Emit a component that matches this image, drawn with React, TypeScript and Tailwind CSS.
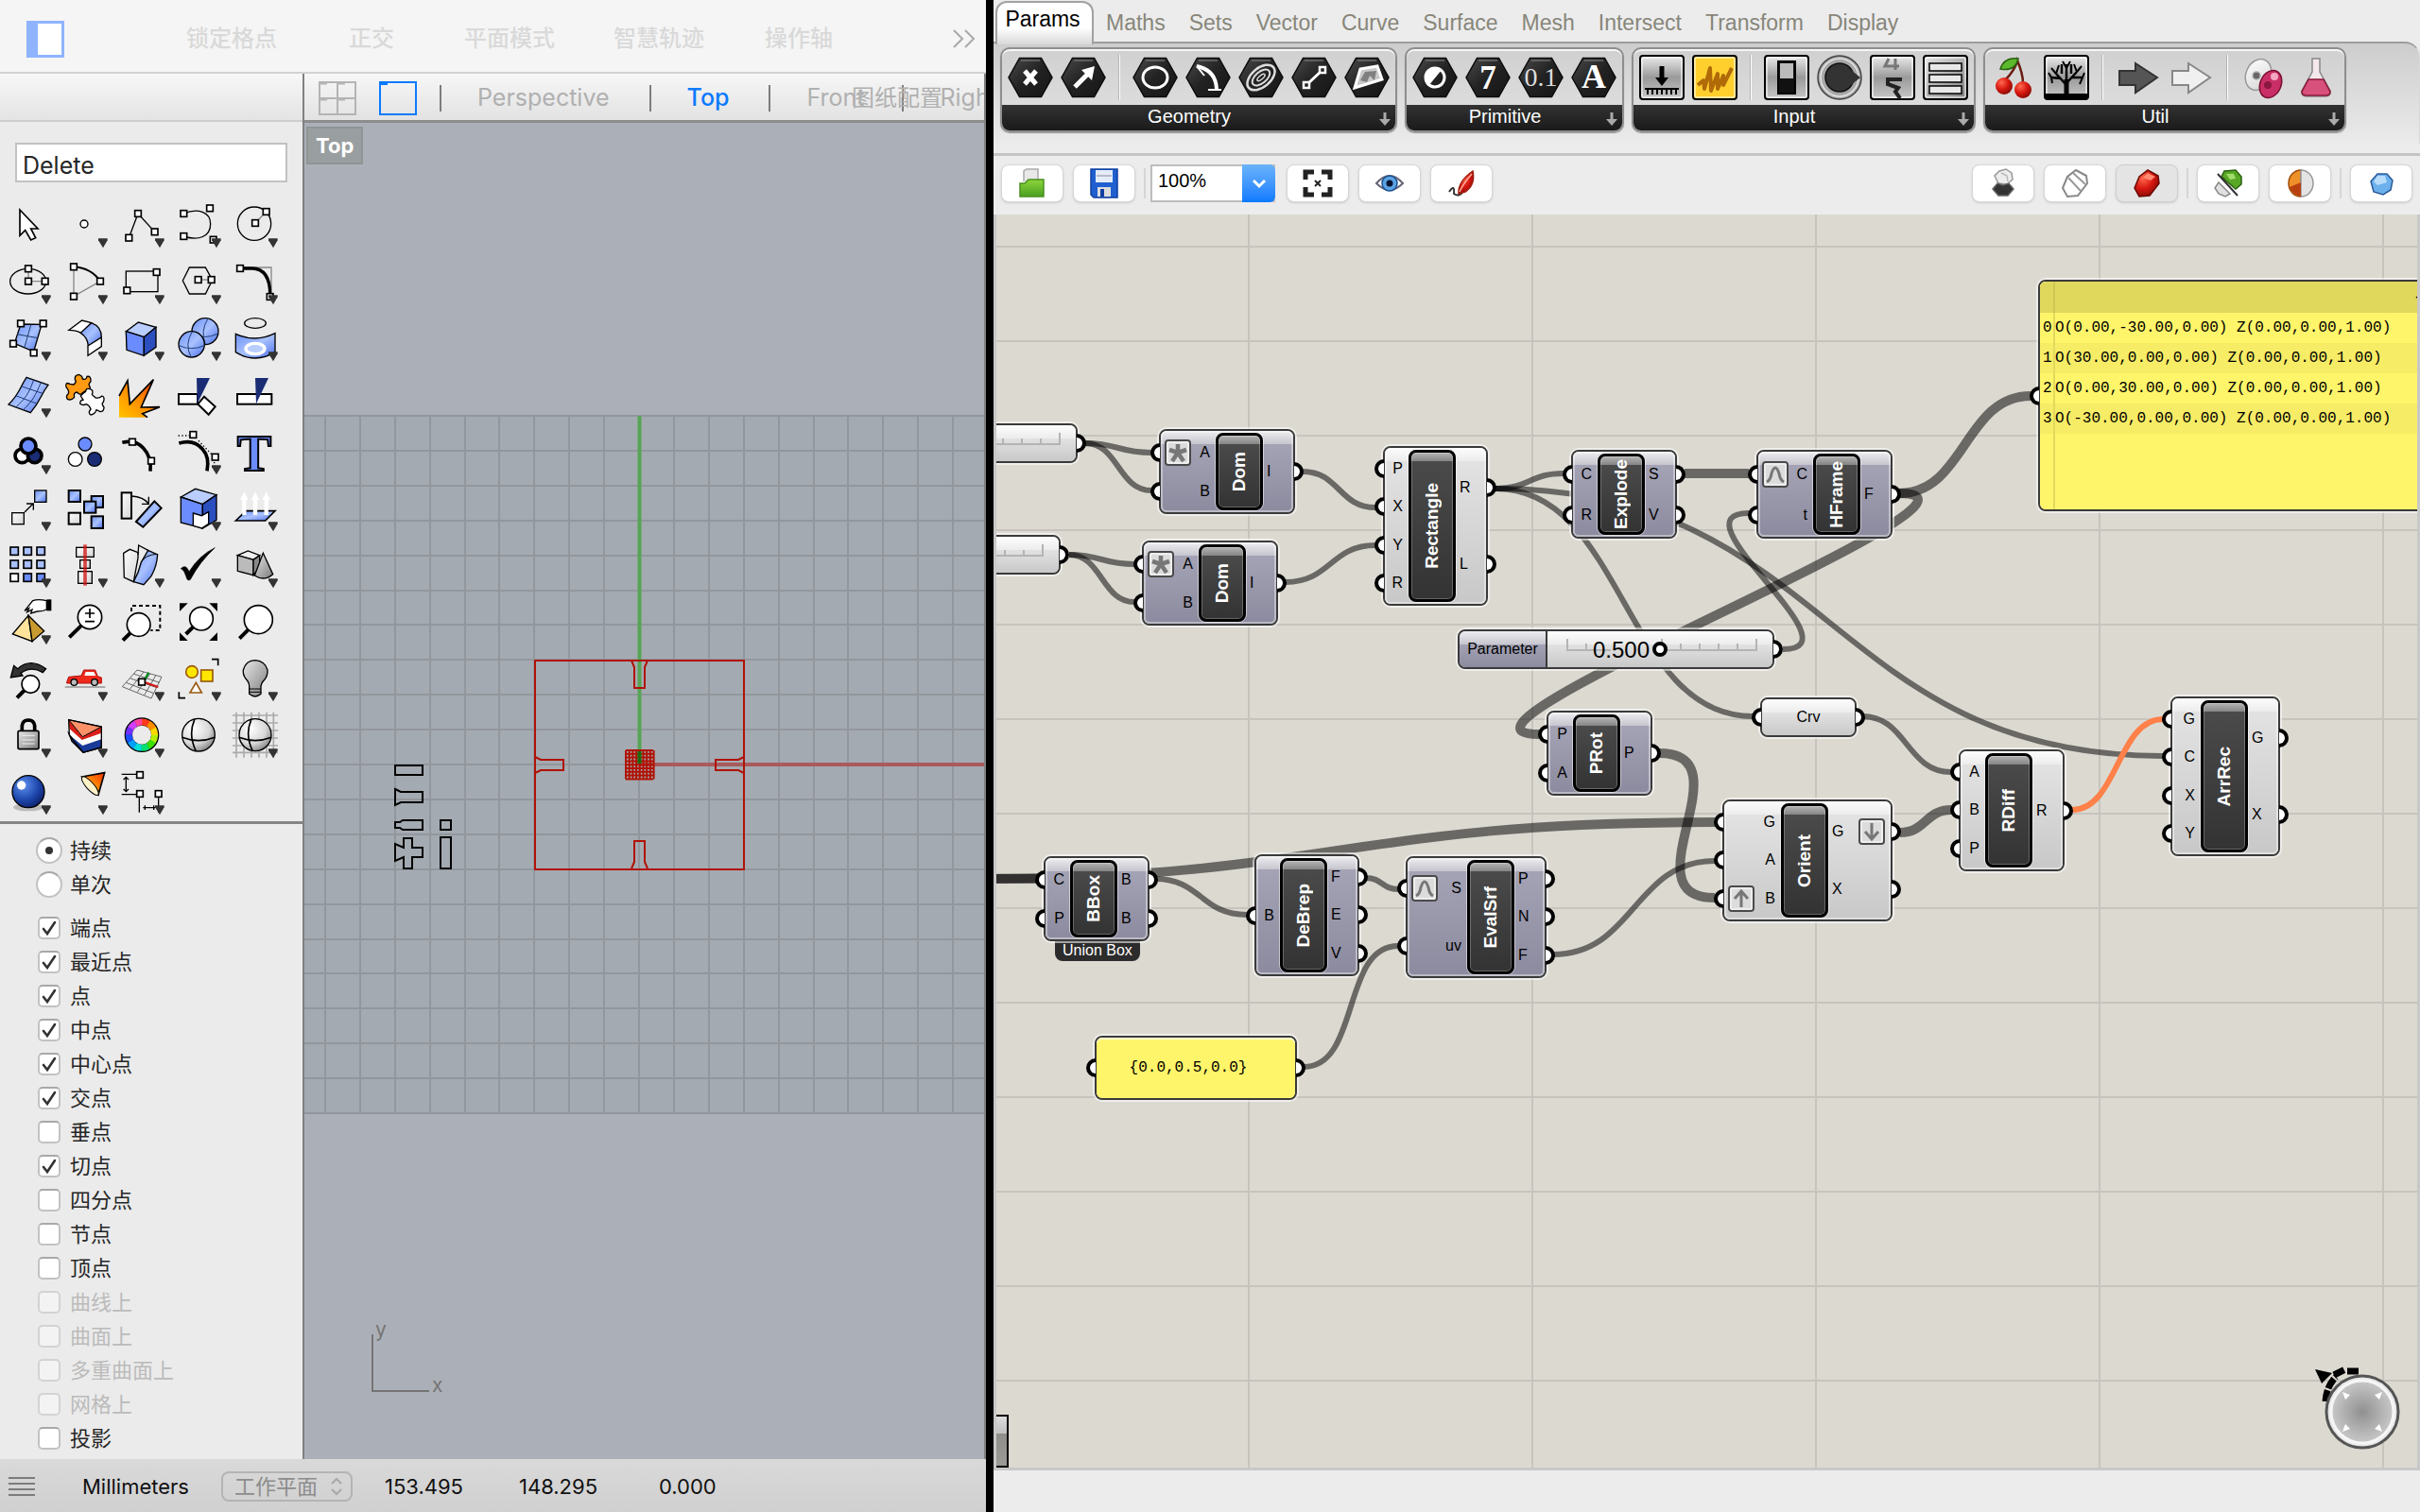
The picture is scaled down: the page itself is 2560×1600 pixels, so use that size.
import React from "react";

type Kids = { children?: React.ReactNode };

/* ---------- left tool palette icons (drawn on a 180 unit square) ---------- */

function Sq({ x, y }: { x: number; y: number }) {
  return <rect x={x - 10} y={y - 10} width="20" height="20" fill="#fff" stroke="#000" strokeWidth="5" />;
}

function Glass({ x, y, r, hx, hy }: { x: number; y: number; r: number; hx: number; hy: number }) {
  return (
    <>
      <path d={`M${x - r * 0.7} ${y + r * 0.7}L${hx} ${hy}`} stroke="#000" strokeWidth="12" />
      <circle cx={x} cy={y} r={r} fill="#fff" stroke="#000" strokeWidth="5" />
    </>
  );
}

const WHEEL = ["#ff3a1a", "#ff8c00", "#ffd800", "#b4f000", "#3ce000", "#00e070", "#00e0d8", "#00a0ff", "#1a50ff", "#7030ff", "#d040ff", "#ff40a0"];

const TOOLS: { name: string; more: boolean; art: React.ReactNode }[] = [
  { name: "Select", more: false, art: <path d="M63 45V127L80 110L98 141L113 134L98 105H120Z" fill="#fff" strokeWidth="5" /> },
  { name: "Point", more: true, art: <circle cx="87" cy="90" r="12" fill="#fff" /> },
  { name: "Polyline", more: true, art: <><path d="M49 134L78 57L131 115" /><Sq x={49} y={134} /><Sq x={78} y={57} /><Sq x={131} y={115} /></> },
  { name: "Curve", more: true, art: <><path d="M43 57C88 38 128 52 128 90C128 130 90 145 43 129" /><Sq x={43} y={57} /><Sq x={126} y={40} /><Sq x={43} y={129} /><Sq x={137} y={140} /></> },
  { name: "Circle", more: true, art: <><circle cx="87" cy="89" r="53" /><path d="M90 87L125 51" stroke="#888" /><Sq x={90} y={87} /><Sq x={125} y={51} /></> },
  { name: "Ellipse", more: true, art: <><ellipse cx="89" cy="92" rx="57" ry="40" /><path d="M90 52V92H143" stroke="#888" /><Sq x={90} y={52} /><Sq x={90} y={92} /><Sq x={143} y={92} /></> },
  { name: "Arc", more: true, art: <><path d="M54 46V140L138 92" stroke="#888" /><path d="M54 46Q110 50 138 92" strokeWidth="6" /><Sq x={54} y={46} /><Sq x={54} y={140} /><Sq x={138} y={92} /></> },
  { name: "Rectangle", more: true, art: <><rect x="40" y="60" width="101" height="65" /><Sq x={137} y={63} /><Sq x={43} y={121} /></> },
  { name: "Polygon", more: true, art: <><path d="M40 90L61 48H112L134 88L112 132H61Z" /><path d="M89 87H131" stroke="#888" /><Sq x={89} y={87} /><Sq x={131} y={87} /></> },
  { name: "Fillet", more: true, art: <><path d="M42 48H141V130" stroke="#888" /><path d="M42 51H80C120 52 137 80 137 134" strokeWidth="10" /><Sq x={42} y={51} /><Sq x={137} y={141} /></> },
  { name: "Surface", more: true, art: <><path d="M66 48L132 49L107 135L46 109Z" fill="url(#sky)" /><path d="M98 50L78 121M54 80L120 92" stroke="#1a3a6a" strokeWidth="3" /><Sq x={66} y={46} /><Sq x={137} y={46} /><Sq x={42} y={110} /><Sq x={107} y={139} /></> },
  { name: "Surface blend", more: true, art: <><path d="M39 67L80 36L110 44L78 76Q62 67 39 67Z" fill="#fff" /><path d="M110 44Q142 56 142 90L100 117Q98 90 76 76Z" fill="url(#sky)" /><path d="M142 90V119L99 148V117Z" fill="#fff" /></> },
  { name: "Box", more: true, art: <><path d="M40 71L79 42L135 58L97 89Z" fill="#b9cdff" /><path d="M40 71L97 89V148L42 130Z" fill="#6b8cff" /><path d="M97 89L135 58V121L97 148Z" fill="#2c4fc0" /></> },
  { name: "Sphere", more: true, art: <><circle cx="111" cy="71" r="42" fill="url(#sky)" /><path d="M70 80Q110 98 152 78M120 30Q95 70 112 112" strokeWidth="3" stroke="#23407a" /><circle cx="68" cy="112" r="41" fill="url(#sky)" /><path d="M28 116Q68 134 108 116M70 72Q45 112 66 152" strokeWidth="3" stroke="#23407a" /></> },
  { name: "Project", more: true, art: <><ellipse cx="90" cy="45" rx="34" ry="16" /><path d="M28 79Q90 108 153 77V137Q90 175 28 137Z" fill="url(#sky)" /><ellipse cx="90" cy="126" rx="30" ry="17" fill="#b9cdff" stroke="#fff" strokeWidth="10" /></> },
  { name: "Mesh surface", more: true, art: <><path d="M84 37L153 61C130 90 130 110 97 149L27 123C62 90 62 70 84 37Z" fill="url(#sky)" /><path d="M107 45C90 90 84 100 50 132M130 53C112 95 105 110 74 140M70 66L135 88M50 95L116 120" strokeWidth="3" stroke="#1d3a78" /></> },
  { name: "Join", more: false, art: <><path d="M30 68Q26 50 42 58L54 60Q64 52 58 44Q56 30 70 28Q82 32 82 42Q94 46 96 34Q110 32 108 50Q98 58 106 68L104 80Q92 76 82 86Q76 96 64 84Q52 86 56 100Q46 112 34 106Q28 96 36 90Q42 82 30 68Z" fill="#ff9a12" /><path d="M76 96Q84 86 92 82Q92 70 106 74Q118 78 112 92L124 102Q136 104 144 96Q154 100 148 116Q140 120 150 132Q150 146 138 146L126 140Q122 154 108 156Q98 150 108 138Q104 126 94 122Q82 128 74 120Q74 110 84 108Z" fill="#fff" /></> },
  { name: "Explode", more: false, art: <><path d="M18 164V96L45 47L52 122L127 44L88 132L147 131L92 152L108 164Z" fill="url(#fire)" stroke="none" /><path d="M18 96L45 47L52 122L127 44L88 132L147 131L92 152L108 164" strokeWidth="5" /></> },
  { name: "Trim", more: false, art: <><rect x="27" y="90" width="60" height="32" fill="#fff" strokeWidth="6" /><path d="M108 98L143 130L122 155L88 122Z" fill="#fff" strokeWidth="6" /><path d="M84 39H126L86 121Z" fill="#1a2c74" stroke="none" /></> },
  { name: "Split", more: false, art: <><rect x="33" y="90" width="109" height="32" fill="#fff" strokeWidth="6" /><path d="M90 39H132L93 121Z" fill="#1a2c74" stroke="none" /></> },
  { name: "Group", more: true, art: <g strokeWidth="11"><circle cx="70" cy="106" r="22" fill="#fff" /><circle cx="110" cy="106" r="22" fill="#1a2c74" /><circle cx="90" cy="75" r="24" fill="#6b8cff" /></g> },
  { name: "Ungroup", more: false, art: <><circle cx="90" cy="69" r="21" fill="#6b8cff" /><circle cx="59" cy="117" r="22" fill="#fff" /><circle cx="120" cy="117" r="22" fill="#1a2c74" /></> },
  { name: "Edit points", more: false, art: <><path d="M28 64Q70 54 95 82Q122 110 117 155" strokeWidth="11" /><Sq x={60} y={62} /><Sq x={120} y={122} /></> },
  { name: "Control points", more: true, art: <><path d="M28 66Q75 52 102 84Q126 110 117 154" strokeWidth="11" /><path d="M26 42H62M90 58L140 110V158" strokeDasharray="4 7" /><Sq x={73} y={39} /><Sq x={143} y={110} /></> },
  { name: "Text", more: false, art: <text x="87" y="152" textAnchor="middle" fontFamily="Liberation Serif, serif" fontWeight="700" fontSize="164" fill="#6b8cff" strokeWidth="6">T</text> },
  { name: "Move", more: true, art: <><rect x="110" y="36" width="37" height="37" fill="url(#sky)" /><rect x="38" y="107" width="38" height="36" fill="url(#pale)" /><path d="M78 105L105 78M84 78H106V98" /></> },
  { name: "Copy", more: false, art: <><rect x="38" y="36" width="37" height="36" fill="url(#sky)" strokeWidth="6" /><rect x="110" y="54" width="37" height="36" fill="url(#sky)" strokeWidth="6" /><rect x="87" y="71" width="37" height="36" fill="url(#sky)" strokeWidth="6" /><rect x="38" y="107" width="37" height="36" fill="url(#pale)" strokeWidth="6" /><rect x="110" y="118" width="37" height="38" fill="url(#sky)" strokeWidth="6" /></> },
  { name: "Rotate", more: false, art: <><rect x="26" y="43" width="31" height="82" fill="url(#pale)" strokeWidth="6" /><path d="M58 54Q95 56 112 78M112 56V79H90" /><path d="M72 135L130 70L152 92L94 152Z" fill="url(#sky)" strokeWidth="6" /></> },
  { name: "Boolean", more: true, art: <><path d="M34 57L80 31L147 50L103 80Z" fill="#b9cdff" /><path d="M34 57L103 80V156L34 138Z" fill="#6b8cff" /><path d="M103 80L147 50V130L103 156Z" fill="#2c4fc0" /><path d="M73 108L100 116L122 104V142L100 156L73 148Z" fill="#fff" /></> },
  { name: "Extrude", more: true, art: <><path d="M28 132L60 101H153L122 132Z" fill="url(#sky)" strokeWidth="5" /><path d="M55 114V58M90 114V58M125 114V58" stroke="#fff" strokeWidth="13" /><path d="M42 66L55 40L68 66ZM77 66L90 40L103 66ZM112 66L125 40L138 66Z" fill="#fff" stroke="none" /></> },
  { name: "Array", more: true, art: <>{[0, 1, 2].map((r) => [0, 1, 2].map((c) => <rect key={`${r}${c}`} x={33 + c * 42} y={36 + r * 42} width="25" height="25" strokeWidth="5" fill={r === 2 ? (c === 0 ? "#fff" : "#6b8cff") : "#a9c0ff"} />))}</> },
  { name: "Align", more: true, art: <><rect x="62" y="37" width="56" height="30" fill="url(#pale)" /><rect x="74" y="77" width="32" height="26" fill="url(#pale)" /><rect x="68" y="113" width="44" height="38" fill="url(#pale)" /><path d="M90 28V158" stroke="#d01010" strokeOpacity=".75" strokeWidth="11" /></> },
  { name: "Twist", more: true, art: <><path d="M32 55L52 43L78 53V70L64 146L34 132Z" fill="url(#pale)" /><path d="M78 60L80 30L110 46" /><path d="M64 146Q80 118 88 84L110 46L140 60Q138 96 120 128L96 155Z" fill="url(#sky)" /><path d="M88 84Q100 60 140 58" strokeWidth="3" /></> },
  { name: "Check", more: true, art: <path d="M34 104Q50 88 60 114Q92 62 142 38Q94 82 64 139Q54 145 51 130Q45 108 34 104Z" fill="#000" strokeWidth="2" /> },
  { name: "Solids", more: true, art: <><path d="M34 62L67 48L104 62L84 76Z" fill="#eee" /><path d="M34 62L84 76V125L34 112Z" fill="#bbb" /><path d="M84 76L104 62V100L84 125Z" fill="#888" /><path d="M115 55L146 122Q118 146 88 126Z" fill="url(#steel)" /></> },
  { name: "Pyramid", more: true, art: <><path d="M40 132L90 73L102 155Z" fill="#ffe39a" /><path d="M90 73L140 122L102 155Z" fill="#c99a30" /><path d="M148 26Q120 20 104 26L78 58L92 50L86 62L102 54L98 66L118 60Q136 60 148 54Z" fill="#fff" /><rect x="150" y="24" width="11" height="32" fill="#000" /></> },
  { name: "Zoom in or out", more: false, art: <><Glass x={105} y={78} r={38} hx={40} hy={142} /><path d="M90 66H120M105 51V81M90 92H120" strokeWidth="5" /></> },
  { name: "Zoom window", more: false, art: <><path d="M57 60V42H148V120H118" strokeDasharray="12 9" strokeWidth="6" /><Glass x={80} y={102} r={37} hx={30} hy={152} /></> },
  { name: "Zoom extents", more: false, art: <><path d="M30 34H56L30 60ZM150 34H124L150 60ZM30 153H56L30 127ZM150 153H124L150 127Z" fill="#000" stroke="none" /><Glass x={99} y={83} r={37} hx={50} hy={132} /></> },
  { name: "Zoom", more: false, art: <Glass x={100} y={86} r={45} hx={40} hy={146} /> },
  { name: "Undo view", more: true, art: <><path d="M34 90L44 52L56 62Q96 26 146 62L136 74Q100 52 66 76L72 84Z" fill="#333" /><Glass x={97} y={111} r={28} hx={54} hy={154} /></> },
  { name: "Car", more: true, art: <><path d="M26 120H154" stroke="#aaa" strokeWidth="6" /><path d="M32 104L38 88L78 84L86 66H122L130 86L142 90V108H32Z" fill="#ee2a1c" stroke="#b01010" strokeWidth="3" /><path d="M92 72H118L124 84H88Z" fill="#fff" stroke="none" /><circle cx="55" cy="105" r="10" fill="#bbb" /><circle cx="120" cy="105" r="10" fill="#bbb" /></> },
  { name: "Construction plane", more: true, art: <><path d="M28 119L75 66L153 88L120 156ZM52 127L96 72M76 136L116 78M98 146L134 84M40 106L128 140M52 92L138 122M64 78L146 106" stroke="#666" strokeWidth="3" /><path d="M95 104L112 74" stroke="#0a8a20" strokeWidth="7" /><path d="M95 104L142 120" stroke="#d01818" strokeWidth="7" /><Sq x={90} y={104} /></> },
  { name: "Filter", more: true, art: <><g stroke="#9a5a10" strokeWidth="5"><circle cx="69" cy="72" r="19" fill="#ffe600" /><rect x="98" y="66" width="37" height="36" fill="#ffe600" /><path d="M82 106L100 138H63Z" fill="#fff" /></g><path d="M132 32H152V52M28 136V155H48" strokeWidth="5" /></> },
  { name: "Lamp", more: true, art: <><path d="M71 120Q72 106 60 94Q50 80 52 66Q60 36 90 35Q122 38 129 66Q130 84 120 96Q108 108 108 120V142Q90 158 71 142Z" fill="url(#steel)" /><path d="M72 126H108M72 136H108" strokeWidth="3" /></> },
  { name: "Lock", more: true, art: <><path d="M70 80V62Q72 46 90 45Q108 46 110 62V80" strokeWidth="11" /><rect x="57" y="79" width="66" height="58" rx="5" fill="url(#steel)" strokeWidth="5" /><path d="M70 94H110M70 108H110M70 120H110" stroke="#eee" strokeWidth="3" /></> },
  { name: "Layers", more: true, art: <><path d="M38 86L82 122L142 104V132L84 148L48 112Z" fill="#1a3a9a" /><path d="M40 70L82 104L142 84V106L82 126L40 92Z" fill="#fff" stroke="none" /><path d="M38 44L82 98L142 66V86L80 108L40 72Z" fill="#d82018" stroke="none" /><path d="M38 44L142 66L82 98Z" fill="#ff9068" strokeWidth="3" /><path d="M38 44L142 66V132L84 148L40 92Z" /></> },
  { name: "Colours", more: true, art: <><circle cx="90" cy="92" r="41" strokeWidth="28" stroke="#000" />{WHEEL.map((c, i) => <circle key={c} cx="90" cy="92" r="41" stroke={c} strokeWidth="21" pathLength="12" strokeDasharray="1.03 10.97" strokeDashoffset={-i} transform="rotate(-90 90 92)" />)}<circle cx="90" cy="92" r="30" fill="#ebebeb" stroke="none" /></> },
  { name: "Shaded", more: false, art: <><circle cx="90" cy="92" r="52" fill="url(#ball)" /><path d="M38 100Q90 120 142 100M78 42Q56 90 82 144" strokeWidth="5" /></> },
  { name: "Shaded grid", more: true, art: <><path d="M18 30H162M18 54H162M18 78H162M18 102H162M18 126H162M18 148H162M30 20V164M54 20V164M78 20V164M102 20V164M126 20V164M148 20V164" stroke="#aaa" strokeWidth="5" /><circle cx="90" cy="92" r="51" fill="url(#ball)" /><path d="M39 100Q90 120 141 100M78 42Q56 90 82 144" strokeWidth="5" /></> },
  { name: "Render", more: true, art: <><ellipse cx="90" cy="142" rx="48" ry="12" fill="#bbb" stroke="none" /><circle cx="90" cy="92" r="51" fill="url(#deep)" /><circle cx="68" cy="72" r="14" fill="#fff" stroke="none" /></> },
  { name: "Spot light", more: true, art: <><path d="M80 45L152 32L132 102Z" fill="url(#fire)" strokeWidth="5" /><ellipse cx="106" cy="74" rx="12" ry="38" transform="rotate(-42 106 74)" fill="#fff3c8" strokeWidth="3" /></> },
  { name: "Dimension", more: true, art: <><path d="M26 37H76M26 101H76M82 106V158M143 106V158M40 48V90M32 54L40 46L48 54M32 84L40 92L48 84M94 143H132M100 136V150M128 136V150" /><Sq x={84} y={39} /><Sq x={84} y={99} /><Sq x={143} y={99} /></> },
];

function Defs() {
  return (
    <svg className="absolute size-0" aria-hidden="true">
      <defs>
        <linearGradient id="sky" x1="0" y1="0" x2="1" y2="1"><stop offset="0" stopColor="#6b90f4" /><stop offset=".5" stopColor="#a9c2ff" /><stop offset="1" stopColor="#4a6ee8" /></linearGradient>
        <linearGradient id="pale" x1="0" y1="0" x2="1" y2="1"><stop offset="0" stopColor="#fff" /><stop offset="1" stopColor="#d4d4d4" /></linearGradient>
        <linearGradient id="fire" x1="0" y1="1" x2="1" y2="0"><stop offset="0" stopColor="#ffc400" /><stop offset=".5" stopColor="#ff8a00" /><stop offset="1" stopColor="#f03000" /></linearGradient>
        <linearGradient id="steel" x1="0" y1="0" x2="1" y2="1"><stop offset="0" stopColor="#e8e8e8" /><stop offset="1" stopColor="#7c7c7c" /></linearGradient>
        <radialGradient id="ball" cx=".35" cy=".3" r=".8"><stop offset="0" stopColor="#fff" /><stop offset=".6" stopColor="#d8d8d8" /><stop offset="1" stopColor="#777" /></radialGradient>
        <radialGradient id="deep" cx=".35" cy=".3" r=".8"><stop offset="0" stopColor="#5c90f0" /><stop offset=".6" stopColor="#1c44a8" /><stop offset="1" stopColor="#0a1c60" /></radialGradient>
        <linearGradient id="hex" x1="0" y1="0" x2="1" y2="1"><stop offset="0" stopColor="#4a4a4a" /><stop offset=".5" stopColor="#222" /><stop offset="1" stopColor="#161616" /></linearGradient>
        <linearGradient id="metal" x1="0" y1="0" x2="0" y2="1"><stop offset="0" stopColor="#ececec" /><stop offset=".5" stopColor="#9a9a9a" /><stop offset="1" stopColor="#c8c8c8" /></linearGradient>
        <linearGradient id="folder" x1="0" y1="0" x2="0" y2="1"><stop offset="0" stopColor="#8ed63c" /><stop offset="1" stopColor="#4aa020" /></linearGradient>
        <radialGradient id="red" cx=".35" cy=".3" r=".8"><stop offset="0" stopColor="#ff6a50" /><stop offset=".5" stopColor="#d81810" /><stop offset="1" stopColor="#7a0804" /></radialGradient>
        <radialGradient id="dial" cx=".5" cy=".5" r=".5"><stop offset="0" stopColor="#909090" /><stop offset="1" stopColor="#c8c8c8" /></radialGradient>
      </defs>
    </svg>
  );
}

const SNAPS: [string, boolean, boolean][] = [
  ["端点", true, false], ["最近点", true, false], ["点", true, false], ["中点", true, false], ["中心点", true, false],
  ["交点", true, false], ["垂点", false, false], ["切点", true, false], ["四分点", false, false], ["节点", false, false],
  ["顶点", false, false], ["曲线上", false, true], ["曲面上", false, true], ["多重曲面上", false, true], ["网格上", false, true], ["投影", false, false],
];

function Sidebar() {
  return (
    <aside className="flex w-[320px] shrink-0 flex-col bg-[#ebebeb]">
      <div className="h-[51px] shrink-0 border-b-2 border-[#cdcdcd] bg-linear-to-b from-[#f7f7f7] to-[#e4e4e4]" />
      <div className="px-4 pt-[22px]">
        <input aria-label="Command" defaultValue="Delete" className="h-[42px] w-[288px] border-2 border-[#c2c2c2] bg-white px-1.5 pt-1.5 text-[25px] text-[#262626] outline-none" />
      </div>
      <div className="mt-3.5 grid w-[300px] grid-cols-5">
        {TOOLS.map((t) => (
          <button key={t.name} aria-label={t.name} className="size-[60px]">
            <svg viewBox="0 0 180 180" className="size-[60px] overflow-visible" fill="none" stroke="#000" strokeWidth="4">
              {t.art}
              {t.more && <path d="M132 136H161V142L147 166L132 142Z" fill="#333" stroke="none" />}
            </svg>
          </button>
        ))}
      </div>
      <div className="mt-0.5 border-t-[3px] border-[#858585]" />
      <fieldset className="pt-2.5 pl-[38px] text-[22px] text-[#262626]">
        {["持续", "单次"].map((t, i) => (
          <label key={t} className="flex h-9 items-center gap-2">
            <input type="radio" name="mode" defaultChecked={i === 0} className="grid size-7 appearance-none place-items-center rounded-full border-2 border-[#c2c2c2] border-t-[#a8a8a8] bg-white before:size-2 before:rounded-full checked:before:bg-[#333]" />
            {t}
          </label>
        ))}
      </fieldset>
      <div className="mt-2.5 pl-10 text-[22px] text-[#262626]">
        {SNAPS.map(([t, on, off]) => (
          <label key={t} className={off ? "flex h-9 items-center gap-2.5 text-[#bbb]" : "flex h-9 items-center gap-2.5"}>
            <span className="grid size-6">
              <input type="checkbox" defaultChecked={on} disabled={off} className="peer col-start-1 row-start-1 size-6 appearance-none rounded-[5px] border-2 border-[#c2c2c2] border-t-[#a8a8a8] bg-white disabled:border-[#d3d3d3] disabled:bg-[#f3f3f3]" />
              <svg viewBox="0 0 24 24" className="invisible col-start-1 row-start-1 size-6 peer-checked:visible" fill="none" stroke="#333" strokeWidth="2.6">
                <path d="M6 13L10 18L18 6" strokeLinecap="round" />
              </svg>
            </span>
            {t}
          </label>
        ))}
      </div>
    </aside>
  );
}

function Bar() {
  return <span className="h-7 w-0.5 shrink-0 bg-[#7d7d7d]" />;
}

const CELL = 36.9;

function Viewport() {
  const n = Array.from({ length: 21 }, (_, i) => i - 10);
  return (
    <div className="relative flex-1 overflow-hidden bg-[#abb0b8]">
      <svg className="absolute top-0 left-0" width="724" height="1416" viewBox="322 130 724 1416" fill="none">
        <rect x="300" y="440" width="760" height="738" fill="#a4aab1" />
        <path stroke="#92979d" strokeWidth="2" d={n.map((i) => `M300 ${Math.round(809 + i * CELL)}H1060M${Math.round(676 + i * CELL)} 440V1178`).join("")} />
        <path d="M676.5 440V809" stroke="#56a556" strokeWidth="4" />
        <path d="M676.5 809H1060" stroke="#a95a5c" strokeWidth="4" />
        <g stroke="#b01205" strokeWidth="2">
          <rect x="566" y="699" width="221" height="221" />
          <path d="M668 699L671 706V728H682V706L685 699M668 919L671 912V890H682V912L685 919M566 801L572 804H596V815H572L566 818M787 801L781 804H757V815H781L787 818" />
          <path d={Array.from({ length: 9 }, (_, i) => `M662 ${794 + i * 3.8}H691M${662 + i * 3.7} 794V824.500`).join("")} />
        </g>
        <path d="M676.5 795V808" stroke="#1c6a10" strokeWidth="4" />
        <g stroke="#000" strokeWidth="2">
          <rect x="418" y="810" width="29" height="10" />
          <path d="M418 835L424 838H447V849H424L418 852Z" />
          <path d="M418 870H423L426 868H447V878H426L423 876H418Z" />
          <rect x="466" y="868" width="11" height="10" />
          <rect x="466" y="886" width="11" height="33" />
          <path d="M427 887H436V897H447V907H436V919H427V907L418 911V893L427 897Z" />
        </g>
        <path d="M394 1412V1472H454" stroke="#757575" strokeWidth="2" />
        <g fill="#757575" fontFamily="Inter, sans-serif" fontSize="21">
          <text x="397" y="1414">y</text>
          <text x="457" y="1473">x</text>
        </g>
      </svg>
      <span className="absolute top-1 left-0.5 border-2 border-[#8f9494] bg-[#999ea0] px-2 text-[22px] leading-9 font-bold text-white">Top</span>
    </div>
  );
}

function Modeler() {
  return (
    <section className="flex min-w-0 flex-col overflow-hidden bg-[#ebebeb]">
      <header className="flex h-[78px] shrink-0 items-center border-b-2 border-[#d2d2d2] bg-[#f5f5f5] pt-1.5 text-[24px] font-medium text-[#d9d9d9]">
        <button aria-label="Sidebar" className="ml-7 h-[39px] w-10 border-[3px] border-l-[12px] border-[#8fb3ff] bg-white" />
        <nav className="ml-[103px] flex">
          <button className="w-[148px]">锁定格点</button>
          <button className="w-[148px]">正交</button>
          <button className="w-[144px]">平面模式</button>
          <button className="w-[172px]">智慧轨迹</button>
          <button className="w-[124px]">操作轴</button>
        </nav>
        <button aria-label="More" className="mr-2.5 ml-auto">
          <svg width="26" height="20" fill="none" stroke="#a9a9a9" strokeWidth="2"><path d="M2 1L11 10L2 19M14 1L23 10L14 19" /></svg>
        </button>
      </header>
      <div className="flex min-h-0 flex-1">
        <Sidebar />
        <div className="flex min-w-0 flex-1 flex-col border-x-2 border-[#7f8080]">
          <nav className="relative flex h-[52px] shrink-0 items-center overflow-hidden border-b-[3px] border-[#8b8d8d] bg-linear-to-b from-[#f7f7f7] to-[#e2e2e2] pt-0.5 pl-[15px] text-[25px] text-[#b0b0b0]">
            <button aria-label="Four views" className="shrink-0">
              <svg width="40" height="36" fill="none" stroke="#b4b4b4" strokeWidth="2"><path d="M1 1H39V35H1ZM20 1V35M1 18H39" /><path d="M1 2H9M20 2H28M1 19H9M20 19H28" strokeWidth="3" /></svg>
            </button>
            <button aria-label="Single view" className="mx-6 shrink-0">
              <svg width="40" height="36" fill="none" stroke="#0a7aff" strokeWidth="2"><path d="M1 1H39V35H1Z" /><path d="M1 2H9" strokeWidth="4" /></svg>
            </button>
            <Bar />
            <button className="mr-[42px] ml-[38px]">Perspective</button>
            <Bar />
            <button className="mr-[42px] ml-[38px] font-medium text-[#0a7aff]">Top</button>
            <Bar />
            <button className="mr-10 ml-[38px]">Front</button>
            <Bar />
            <button className="ml-[38px] shrink-0">Right</button>
            <button className="absolute left-[579px] text-[24px]">图纸配置</button>
          </nav>
          <Viewport />
        </div>
      </div>
      <footer className="flex h-14 shrink-0 items-center bg-linear-to-b from-[#d9d9d9] to-[#d0d0d0] pt-0.5 pl-[9px] text-[22px] text-[#111]">
        <svg width="28" height="22" stroke="#7c7c7c" strokeWidth="2"><path d="M0 2H28M0 8H28M0 14H28M0 20H28" /></svg>
        <span className="w-[197px] pl-[50px]">Millimeters</span>
        <span className="relative">
          <select aria-label="Plane" className="h-8 w-[139px] appearance-none rounded-lg border-2 border-[#b4b4b4] bg-transparent pl-3 text-[22px] leading-7 text-[#8c8c8c]">
            <option>工作平面</option>
          </select>
          <svg className="absolute top-1.5 right-2.5" width="14" height="20" fill="none" stroke="#a8a8a8" strokeWidth="2"><path d="M2 7L7 2L12 7M2 13L7 18L12 13" /></svg>
        </span>
        <span className="w-[142px] pl-[34px]">153.495</span>
        <span className="w-[150px] pl-[34px]">148.295</span>
        <span className="pl-8">0.000</span>
      </footer>
    </section>
  );
}

/* ---------- node editor ribbon ---------- */

function Hex({ children }: Kids) {
  return (
    <svg viewBox="0 0 48 48" className="size-12" fill="none" stroke="#fff" strokeWidth="3">
      <path d="M12.500 3.500H35.500L47 24L35.500 44.500H12.500L1 24Z" fill="url(#hex)" stroke="#0c0c0c" strokeWidth="1.500" />
      <path d="M14 6H34" stroke="#888" strokeWidth="1" />
      {children}
    </svg>
  );
}

function Plate({ fill, children }: Kids & { fill: string }) {
  return (
    <svg viewBox="0 0 48 48" className="size-12" fill="none" stroke="#000" strokeWidth="2">
      <rect x="1" y="1" width="46" height="46" rx="3" fill={fill} />
      <rect x="3" y="3" width="42" height="42" rx="2" stroke="#fff" strokeOpacity=".7" strokeWidth="1.500" />
      {children}
    </svg>
  );
}

function Free({ children }: Kids) {
  return <svg viewBox="0 0 48 48" className="size-12" fill="none" stroke="#333" strokeWidth="1.500">{children}</svg>;
}

const hexText = { stroke: "none", textAnchor: "middle" as const, fontFamily: "Liberation Serif, serif" };

const GROUPS: { name: string; icons: (React.ReactNode | null)[] }[] = [
  {
    name: "Geometry",
    icons: [
      <Hex><path d="M18 17L30 31M30 17L18 31" strokeWidth="5" /></Hex>,
      <Hex><path d="M15 34L29 20" strokeWidth="5" /><path d="M22 16L36 12L33 27Z" fill="#fff" stroke="none" /></Hex>,
      null,
      <Hex><ellipse cx="24" cy="24" rx="13" ry="11" /></Hex>,
      <Hex><path d="M12 12Q32 16 33 36" strokeWidth="4" /><path d="M12 12L20 22M24 37H38" strokeWidth="2" /></Hex>,
      <Hex><ellipse cx="24" cy="24" rx="17" ry="10" transform="rotate(-40 24 24)" strokeWidth="2.500" stroke="#ddd" /><ellipse cx="24" cy="24" rx="11" ry="6" transform="rotate(-40 24 24)" strokeWidth="2" stroke="#ddd" /><ellipse cx="24" cy="24" rx="5" ry="2" transform="rotate(-40 24 24)" strokeWidth="1.500" stroke="#ddd" /></Hex>,
      <Hex><path d="M17 31L32 17" /><rect x="13" y="29" width="6" height="6" fill="#222" strokeWidth="2.500" /><rect x="30" y="13" width="6" height="6" fill="#222" strokeWidth="2.500" /></Hex>,
      <Hex><path d="M17 15L35 12L40 26L11 35Z" fill="#c8c8c8" /><path d="M17 27L22 18L34 17L32 27L27 22L24 29Z" fill="#808080" stroke="none" /></Hex>,
    ],
  },
  {
    name: "Primitive",
    icons: [
      <Hex><circle cx="24" cy="24" r="10" /><path d="M31 15A11 11 0 0 1 17 32Z" fill="#fff" stroke="none" transform="rotate(180 24 24)" /></Hex>,
      <Hex><text x="24" y="36" fontSize="35" fontWeight="700" {...hexText} fill="#fff">7</text></Hex>,
      <Hex><text x="24" y="33" fontSize="28" {...hexText} fill="#ddd">0.1</text></Hex>,
      <Hex><text x="24" y="35" fontSize="36" fontWeight="700" {...hexText} fill="#fff">A</text></Hex>,
    ],
  },
  {
    name: "Input",
    icons: [
      <Plate fill="url(#metal)"><path d="M24 12V26" strokeWidth="5" /><path d="M17 24H31L24 33Z" fill="#000" stroke="none" /><path d="M6 36H42M9 36V42M14 36V42M19 36V42M24 36V42M29 36V42M34 36V42M39 36V42" /></Plate>,
      <Plate fill="#ffcf2e"><path d="M6 32L12 27L13 36L19 14L20 38L27 20L27 36L33 22L33 32L42 14" stroke="#b06a08" strokeWidth="4" strokeLinejoin="round" /></Plate>,
      null,
      <Plate fill="url(#metal)"><rect x="15" y="7" width="18" height="34" fill="#111" /><rect x="17" y="9" width="14" height="16" fill="#bbb" stroke="none" /></Plate>,
      <Free><circle cx="24" cy="24" r="23" fill="#a8a8a8" stroke="#444" /><circle cx="24" cy="24" r="20" stroke="#e4e4e4" /><circle cx="24" cy="24" r="15" fill="#333" stroke="#111" /><path d="M36 16L46 24L36 32Z" fill="#333" stroke="none" /></Free>,
      <Plate fill="url(#metal)"><path d="M20 4L16 12H31M27 4V16" stroke="#777" strokeWidth="3" /><path d="M34 26H19V31L30 35L27 39L32 46" stroke="#222" strokeWidth="4" /></Plate>,
      <Plate fill="url(#steel)"><g fill="#e8e8e8" strokeWidth="1.500"><rect x="7" y="9" width="34" height="8" /><rect x="7" y="21" width="34" height="8" /><rect x="7" y="33" width="34" height="8" /></g></Plate>,
    ],
  },
  {
    name: "Util",
    icons: [
      <Free><path d="M14 28Q26 16 28 6Q34 20 34 30" stroke="#6a1a10" strokeWidth="2.500" /><path d="M10 15Q14 2 29 4Q26 18 10 15Z" fill="#5cb82c" stroke="#2a6010" /><circle cx="14" cy="33" r="9" fill="url(#red)" stroke="none" /><circle cx="34" cy="37" r="9" fill="url(#red)" stroke="none" /></Free>,
      <Plate fill="url(#metal)"><path d="M3 42H45V46H3Z" fill="#000" /><path d="M24 42V26" strokeWidth="5" /><path d="M24 32L13 20M24 30L35 18M24 26V10M18 25L8 24M30 24L41 24M19 20V10M29 20V10" strokeWidth="2.500" /><path d="M8 24L5 19M8 24L9 30M13 20L8 14M13 20L16 11M24 14L20 7M24 14L28 7M35 18L32 10M35 18L40 12M41 24L43 19M41 24L38 31" strokeWidth="2" /></Plate>,
      null,
      <Free><path d="M4 17H21V9L44 24L21 40V32H4Z" fill="#555" strokeWidth="2" /></Free>,
      <Free><path d="M4 17H21V9L44 24L21 40V32H4Z" fill="#f0f0f0" stroke="#888" strokeWidth="2" /></Free>,
      null,
      <Free><ellipse cx="19" cy="21" rx="13" ry="17" transform="rotate(24 19 21)" fill="url(#pale)" stroke="#999" /><circle cx="17" cy="22" r="4" fill="#666" stroke="#aaa" /><ellipse cx="32" cy="31" rx="11" ry="15" transform="rotate(24 32 31)" fill="#c92f66" stroke="#7a1030" /><circle cx="29" cy="32" r="4" fill="#8a1840" stroke="none" /><circle cx="36" cy="23" r="4" fill="#f4a8c0" stroke="none" /></Free>,
      <Free><path d="M20 4H28V18L39 38Q40 44 34 44H14Q8 44 9 38L20 18Z" fill="#f4e8ec" stroke="#888" /><path d="M16 26H32L39 39Q39 43 34 43H14Q9 43 9 39Z" fill="#d8507c" stroke="#8a1838" /></Free>,
    ],
  },
];

const TABS = ["Maths", "Sets", "Vector", "Curve", "Surface", "Mesh", "Intersect", "Transform", "Display"];

function Ribbon() {
  return (
    <div className="flex shrink-0 flex-col">
      <nav className="flex h-11 items-center gap-px pl-0.5 text-[23px] leading-7 text-[#87867a]">
        <button className="z-10 mt-px -mb-0.5 h-[46px] w-[104px] shrink-0 rounded-t-xl border-2 border-b-0 border-[#a2a2a2] bg-linear-to-b from-white from-60% to-[#d8d8d8] pr-1 pb-2.5 text-black">Params</button>
        {TABS.map((t) => <button key={t} className="px-3 pt-1">{t}</button>)}
      </nav>
      <div className="flex h-[108px] items-start gap-2 rounded-tr-2xl border-t-2 border-r border-[#9d9d9d] border-r-[#d8d8d8] bg-linear-to-b from-[#cdcdcd] to-[#ebebeb] pt-1 pl-[7px]">
        {GROUPS.map((g) => (
          <div key={g.name} className="overflow-hidden rounded-[10px] border-2 border-[#8e8e8e] bg-linear-to-b from-[#d0d0d0] to-[#e2e2e2] shadow-[inset_0_2px_0_#f6f6f6,0_1px_1px_#999]">
            <div className="flex h-[59px] items-center px-0.5">
              {g.icons.map((ic, i) => ic ? <button key={i} aria-label={`${g.name} ${i + 1}`} className="grid w-14 place-items-center">{ic}</button> : <span key={i} className="mx-[9px] h-12 w-0.5 border-r border-white bg-[#b4b4b4]" />)}
            </div>
            <div className="relative h-[27px] bg-linear-to-b from-[#333] to-[#1a1a1a] pr-5 text-center text-[20px] leading-6 text-white">
              {g.name}
              <svg className="absolute right-1 bottom-0.5" width="14" height="18" stroke="#aaa" strokeWidth="3"><path d="M7 1V10" /><path d="M1 8H13L7 15Z" fill="#aaa" stroke="none" /></svg>
            </div>
          </div>
        ))}
      </div>
    </div>
  );
}

function TB({ label, dim, children }: Kids & { label: string; dim?: boolean }) {
  return (
    <button aria-label={label} className={dim ? "grid h-10 w-[66px] place-items-center rounded-lg border border-[#cfcfcf] bg-[#e4e4e4] shadow-sm" : "grid h-10 w-[66px] place-items-center rounded-lg border border-[#d6d6d6] bg-white shadow-sm"}>
      <svg viewBox="0 0 32 32" className="size-8" fill="none" stroke="#555" strokeWidth="1.500">{children}</svg>
    </button>
  );
}

function Rule() {
  return <span className="-mx-px h-8 w-0.5 bg-[#d6d6d6]" />;
}

const GEM = "M17 2L28 8L29 16L19 29L8 30L3 21L8 9Z";

function Toolbar() {
  return (
    <div className="flex h-[65px] shrink-0 items-center gap-2.5 border-t-[3px] border-[#c4c4c4] bg-[#ececec] pr-2 pb-1 pl-2">
      <TB label="Open"><path d="M7 14V3L10 1H22V14" fill="#e8e8e8" stroke="#aaa" /><path d="M3 16L8 16L12 12H28V30H3Z" fill="url(#folder)" stroke="#4a9020" /></TB>
      <TB label="Save"><path d="M2 1H30V31H5L2 28Z" fill="#1f5fd0" stroke="#1240a0" /><rect x="7" y="2" width="18" height="13" fill="#e4ecf8" stroke="none" /><path d="M8 8H24" stroke="#aab" /><rect x="9" y="20" width="14" height="10" fill="#ddd" stroke="none" /><rect x="12" y="22" width="4" height="8" fill="#1240a0" stroke="none" /></TB>
      <Rule />
      <span className="relative -ml-1 flex h-10 w-[132px]">
        <select aria-label="Zoom" className="w-full appearance-none border-2 border-[#bdbdbd] bg-white pb-2.5 pl-1.5 text-[20px] text-black">
          <option>100%</option>
        </select>
        <span className="pointer-events-none absolute inset-y-0 right-0 grid w-[35px] place-items-center rounded-r-md bg-linear-to-b from-[#6ab3fa] to-[#0a7aff]">
          <svg width="16" height="11" fill="none" stroke="#fff" strokeWidth="3"><path d="M2 2L8 8L14 2" /></svg>
        </span>
      </span>
      <span className="-ml-2" />
      <TB label="Zoom extents"><path d="M3 12V4H12M20 4H29V12M3 20V28H12M20 28H29V20" stroke="#222" strokeWidth="5" /><path d="M13 13L19 19M19 13L13 19" stroke="#222" strokeWidth="2" /></TB>
      <TB label="Preview"><path d="M2 16Q16 0 30 16Q16 30 2 16Z" fill="#fff" stroke="#667" strokeWidth="2" /><circle cx="16" cy="16" r="8" fill="#5aa4e4" stroke="#1c5090" /><circle cx="16" cy="16" r="3.500" fill="#0a1430" stroke="none" /></TB>
      <TB label="Sketch"><path d="M3 25Q9 16 8 27Q14 31 18 24" stroke="#333" strokeWidth="2" /><path d="M13 27Q12 14 28 3Q31 18 20 25Z" fill="url(#red)" stroke="#a02010" /><path d="M14 25Q18 16 27 6" stroke="#ffb0a0" /></TB>
      <span className="ml-auto" />
      <TB label="No preview"><path d="M12 3L19 1L25 5L26 12L20 17L11 16L7 8Z" fill="#ececec" stroke="#999" /><path d="M14 5L20 8L21 14" stroke="#bbb" /><path d="M5 22L10 16L16 18L22 16L27 22L21 29H11Z" fill="#333" stroke="#666" /></TB>
      <TB label="Wire preview"><path d={GEM} fill="#fff" stroke="#888" strokeWidth="2" /><path d="M9 10L22 24M14 5L27 17" stroke="#999" strokeWidth="2" /></TB>
      <TB label="Shaded preview" dim><path d={GEM} fill="url(#red)" stroke="#6a0a04" /><path d="M17 5L25 9L20 13L12 10Z" fill="#ff8a70" stroke="none" /></TB>
      <Rule />
      <TB label="Selected only"><path d="M6 15L18 27L13 30L6 27L2 21Z" fill="#e0e0e0" stroke="#888" /><path d="M12 3L24 2L30 9L30 17L24 22L9 9Z" fill="#58a826" stroke="#2a6010" /><path d="M14 6L22 6L24 11L18 12Z" fill="#a4dc6c" stroke="none" /><path d="M5 6L26 29" stroke="#333" strokeWidth="2" /></TB>
      <TB label="Document preview"><path d="M17 2A13 14 0 0 0 17 30Z" fill="#ee9028" stroke="#a04a08" /><path d="M17 2A13 14 0 0 1 17 30Z" fill="#e4e4e4" stroke="#999" /><path d="M17 15V30Q8 28 5 20Z" fill="#b84010" stroke="none" /></TB>
      <Rule />
      <TB label="Mesh quality"><path d="M12 6L22 6L28 13L26 23L18 28L8 25L5 14Z" fill="#6cb0ec" stroke="#2c5a98" /><path d="M12 8L20 8L22 15L12 18L8 14Z" fill="#b8dcfa" stroke="none" /></TB>
    </div>
  );
}

/* ---------- node canvas ---------- */

const OX = 1054;
const OY = 227;
const at = (x: number, y: number) => ({ left: x - OX, top: y - OY });

function Grip({ side }: { side: "l" | "r" }) {
  return <i className={side === "l" ? "absolute -left-[11px] h-5 w-[10px] rounded-l-full border-[4px] border-r-0 border-black bg-white" : "absolute -right-[11px] h-5 w-[10px] rounded-r-full border-[4px] border-l-0 border-black bg-white"} />;
}

type Port = string | [string, React.ReactNode];

function Chip({ children }: Kids) {
  return (
    <svg viewBox="0 0 28 28" className="size-7 shrink-0" fill="none" stroke="#777" strokeWidth="3">
      <rect x="1" y="1" width="26" height="26" rx="3" fill="#dcdcdc" stroke="#4a4a4a" strokeWidth="2" />
      <rect x="3" y="3" width="22" height="22" rx="1" stroke="#f4f4f4" strokeWidth="1.500" />
      {children}
    </svg>
  );
}

const Star = <Chip><path d="M14 5V14M14 14L5 11M14 14L23 11M14 14L8 23M14 14L20 23" strokeWidth="4.500" /></Chip>;
const Bell = <Chip><path d="M5 22Q9 20 10 13Q12 7 14 7Q16 7 18 13Q19 20 23 22" /></Chip>;
const Down = <Chip><path d="M14 5V20M7 14L14 22L21 14" /></Chip>;
const Up = <Chip><path d="M14 23V8M7 14L14 6L21 14" /></Chip>;

const LILAC = "bg-[linear-gradient(#ededf1_0px,#c6c5ce_14px,#a4a3b5_14px,#8c8a9e_100%)]";
const SILVER = "bg-[linear-gradient(#fdfdfd_0px,#ececec_14px,#e2e2e2_14px,#c8c8c8_100%)]";
const FRAME = "absolute rounded-lg border-2 border-[#3a3a3a] shadow-[0_0_0_2px_#ffffff90]";

function Ports({ list, side }: { list: Port[]; side: "l" | "r" }) {
  return (
    <div className={side === "l" ? "flex flex-1 flex-col" : "flex w-8 shrink-0 flex-col"}>
      {list.map((p, i) => {
        const [name, chip] = typeof p === "string" ? [p, null] : p;
        return (
          <div key={i} className={side === "l" ? "flex flex-1 items-center justify-end pr-1.5 pl-1" : "flex flex-1 items-center gap-4 pl-1"}>
            {side === "l" && chip && <span className="mr-auto">{chip}</span>}
            <span>{name}</span>
            {side === "r" && chip}
          </div>
        );
      })}
    </div>
  );
}

function Grips({ n, side }: { n: number; side: "l" | "r" }) {
  return (
    <div className="absolute inset-x-0 inset-y-[2px] flex flex-col">
      {Array.from({ length: n }, (_, i) => <div key={i} className="relative flex flex-1 items-center"><Grip side={side} /></div>)}
    </div>
  );
}

function Node({ x, y, w, h, name, ins, outs, light, wide }: { x: number; y: number; w: number; h: number; name: string; ins: Port[]; outs: Port[]; light?: boolean; wide?: boolean }) {
  return (
    <div className={FRAME} style={{ ...at(x, y), width: w, height: h }}>
      <Grips n={ins.length} side="l" />
      <Grips n={outs.length} side="r" />
      <div className={`absolute inset-0 flex rounded-md py-0.5 text-[16px] leading-5 text-black shadow-[inset_0_0_0_2px_#ffffff66] ${light ? SILVER : LILAC}`}>
        <Ports list={ins} side="l" />
        <div className="grid w-[50px] shrink-0 place-items-center rounded-lg border-[3px] border-black bg-[linear-gradient(#b4b4b4_0px,#858585_9px,#4a4a4a_9px,#333_100%)] shadow-[0_0_0_1px_#ffffff80,inset_0_0_0_1px_#ffffff40]">
          <span className="rotate-180 text-[19px] font-bold text-white [writing-mode:vertical-rl]">{name}</span>
        </div>
        {wide ? <div className="flex w-[66px]"><Ports list={outs} side="r" /></div> : <Ports list={outs} side="r" />}
      </div>
    </div>
  );
}

function wire(x1: number, y1: number, x2: number, y2: number, d = (x2 - x1) / 2) {
  return `M${x1} ${y1}C${x1 + d} ${y1} ${x2 - d} ${y2} ${x2} ${y2}`;
}

const THIN = [
  wire(1148, 469, 1218, 479), wire(1148, 469, 1218, 519), wire(1131, 587, 1200, 597), wire(1131, 587, 1200, 637),
  wire(1378, 499, 1455, 537), wire(1360, 616, 1455, 577), wire(1582, 517, 1654, 501), wire(1582, 517, 1854, 758),
  wire(1582, 517, 2288, 800), wire(1886, 687, 1850, 543, 84), wire(1970, 758, 2064, 817), wire(1222, 930, 1319, 968),
  wire(1445, 929, 1479, 941), wire(1379, 1129, 1479, 1001, 60), wire(1643, 1010, 1814, 911),
];
const THICK = [
  wire(1782, 501, 1850, 501), wire(2009, 522, 1628, 777, 142), wire(2009, 522, 2148, 419), wire(1755, 797, 1814, 950, 95),
  wire(2010, 881, 2064, 857), wire(1016, 930, 1814, 870),
];

const ROWS = [
  "O(0.00,-30.00,0.00) Z(0.00,0.00,1.00)",
  "O(30.00,0.00,0.00) Z(0.00,0.00,1.00)",
  "O(0.00,30.00,0.00) Z(0.00,0.00,1.00)",
  "O(-30.00,0.00,0.00) Z(0.00,0.00,1.00)",
];

function Stub({ y, right }: { y: number; right: number }) {
  return (
    <div className={FRAME} style={{ ...at(1034, y), width: right - 1034, height: 42 }}>
      <Grips n={1} side="r" />
      <div className={`absolute inset-0 rounded-md ${SILVER}`}>
        <svg className="absolute top-2 right-4" width="84" height="14" stroke="#b4b4b4" strokeWidth="2"><path d="M0 12H83V0M63 6V12M43 6V12M23 6V12M3 6V12" fill="none" /></svg>
      </div>
    </div>
  );
}

function Canvas() {
  return (
    <div className="relative min-h-0 flex-1 overflow-hidden bg-[#dcd9d1]">
      <svg className="absolute top-0 left-0" width="1520" height="1400" viewBox={`${OX} ${OY} 1520 1400`} fill="none">
        <path stroke="#c6c4bd" strokeWidth="2" d={[1321, 1621, 1921, 2221, 2521].map((x) => `M${x} 0V1700`).join("") + Array.from({ length: 13 }, (_, i) => `M1000 ${261 + i * 100}H2600`).join("")} />
        <g stroke="#000" strokeOpacity=".52">
          {THIN.map((d) => <path key={d} d={d} strokeWidth="6" />)}
          {THICK.map((d) => <path key={d} d={d} strokeWidth="10" />)}
          <path d="M1040 930H1098" strokeWidth="10" />
        </g>
        <path d={wire(2192, 857, 2288, 761)} stroke="#ff8048" strokeWidth="6" />
      </svg>

      <Stub y={448} right={1140} />
      <Stub y={566} right={1122} />
      <Node x={1226} y={454} w={144} h={90} name="Dom" ins={[["A", Star], "B"]} outs={["I"]} />
      <Node x={1208} y={572} w={144} h={90} name="Dom" ins={[["A", Star], "B"]} outs={["I"]} />
      <Node x={1463} y={472} w={111} h={169} name="Rectangle" ins={["P", "X", "Y", "R"]} outs={["R", "L"]} light />
      <Node x={1662} y={476} w={112} h={94} name="Explode" ins={["C", "R"]} outs={["S", "V"]} />
      <Node x={1858} y={476} w={144} h={94} name="HFrame" ins={[["C", Bell], "t"]} outs={["F"]} />
      <Node x={1636} y={752} w={112} h={90} name="PRot" ins={["P", "A"]} outs={["P"]} />
      <Node x={2072} y={793} w={112} h={129} name="RDiff" ins={["A", "B", "P"]} outs={["R"]} light />
      <Node x={2296} y={737} w={116} h={169} name="ArrRec" ins={["G", "C", "X", "Y"]} outs={["G", "X"]} light />
      <Node x={1822} y={846} w={180} h={129} name="Orient" ins={["G", "A", ["B", Up]]} outs={[["G", Down], "X"]} light wide />
      <Node x={1327} y={904} w={111} h={129} name="DeBrep" ins={["B"]} outs={["F", "E", "V"]} />
      <Node x={1487} y={906} w={149} h={129} name="EvalSrf" ins={[["S", Bell], "uv"]} outs={["P", "N", "F"]} />
      <div className="absolute rounded-b-lg bg-[#2c2c2c] px-2 text-[16px] leading-[22px] text-white" style={at(1116, 995)}>Union Box</div>
      <Node x={1104} y={906} w={112} h={90} name="BBox" ins={["C", "P"]} outs={["B", "B"]} />

      <div className={FRAME} style={{ ...at(1542, 666), width: 335, height: 42 }}>
        <Grips n={1} side="r" />
        <div className="absolute inset-0 flex items-stretch overflow-hidden rounded-md text-[16px] text-black">
          <label htmlFor="parameter" className={`grid w-[93px] place-items-center border-r-2 border-[#3a3a3a] ${LILAC}`}>Parameter</label>
          <span className={`relative flex-1 ${SILVER}`}>
            <svg className="absolute top-2 left-5" width="204" height="14" stroke="#b4b4b4" strokeWidth="2" fill="none"><path d="M1 0V12H47M98 12H201V0M21 5V12M101 0V12M121 5V12M141 5V12M161 5V12M181 5V12" /></svg>
            <span className="absolute top-1 left-[48px] text-[24px] leading-8">0.500</span>
            <input id="parameter" type="range" min="0" max="1" step="0.001" defaultValue="0.5" className="absolute inset-x-3 top-1/2 h-0 appearance-none bg-transparent [&::-webkit-slider-thumb]:size-4 [&::-webkit-slider-thumb]:appearance-none [&::-webkit-slider-thumb]:rounded-full [&::-webkit-slider-thumb]:border-4 [&::-webkit-slider-thumb]:border-black [&::-webkit-slider-thumb]:bg-white" />
          </span>
        </div>
      </div>

      <div className={FRAME} style={{ ...at(1862, 738), width: 102, height: 42 }}>
        <Grips n={1} side="l" />
        <Grips n={1} side="r" />
        <div className={`absolute inset-0 grid place-items-center rounded-md text-[16px] text-black ${SILVER}`}>Crv</div>
      </div>

      <div className={FRAME} style={{ ...at(1158, 1096), width: 214, height: 68 }}>
        <Grips n={1} side="l" />
        <Grips n={1} side="r" />
        <div className="absolute inset-0 grid place-items-center rounded-md bg-[#fff56a] pr-4 font-['Liberation_Mono',monospace] text-[16px] text-black shadow-[inset_0_2px_0_#ffffffb0]">{"{0.0,0.5,0.0}"}</div>
      </div>

      <div className={FRAME} style={{ ...at(2156, 296), width: 440, height: 245 }}>
        <Grips n={1} side="l" />
        <div className="absolute inset-0 overflow-hidden rounded-md bg-[#fff56a] font-['Liberation_Mono',monospace] text-[16px] text-black shadow-[inset_0_2px_0_#ffffffb0]">
          <table className="w-full border-collapse text-left">
            <thead>
              <tr className="h-[33px] bg-[#e0d85c]"><th className="w-[15px] border-r-2 border-[#cfc753]" /><th className="pl-[380px] font-normal">{"{"}</th></tr>
            </thead>
            <tbody>
              {ROWS.map((r, i) => (
                <tr key={r} className={i % 2 ? "h-8 bg-[#f7ec66]" : "h-8"}>
                  <td className="border-r-2 border-[#e2d95e] pl-[3px]">{i}</td>
                  <td className="whitespace-pre">{r}</td>
                </tr>
              ))}
              <tr className="h-20"><td className="border-r-2 border-[#e2d95e]" /><td /></tr>
            </tbody>
          </table>
        </div>
      </div>

      <div className="absolute bottom-0 left-0 h-14 w-[13px] border-y-2 border-r-2 border-black bg-[linear-gradient(#dedede_0%,#c0c0c0_35%,#8f8e8a_35%,#9b9a95_100%)]" />

      <svg className="absolute right-4 bottom-[18px]" width="96" height="92" fill="none">
        <path d="M4 6L22 10L11 21Z" fill="#000" />
        <path d="M15 40Q16 24 26 14M24 12L36 6M38 8L50 8" stroke="#000" strokeWidth="7" strokeDasharray="12 2" />
        <circle cx="54" cy="51" r="38" fill="#e8e8e8" stroke="#555" strokeWidth="3" />
        <circle cx="54" cy="51" r="33" fill="url(#dial)" stroke="#f6f6f6" strokeWidth="3" />
        <path d="M33 30L41 33L36 38ZM75 30L67 33L72 38ZM33 72L41 69L36 64ZM75 72L67 69L72 64Z" fill="#fff" />
      </svg>
    </div>
  );
}

export default function App() {
  return (
    <main className="grid h-screen grid-cols-[minmax(0,1043fr)_8px_minmax(0,1509fr)] overflow-hidden bg-black font-[Inter,'Noto_Sans_CJK_SC',sans-serif]">
      <Defs />
      <Modeler />
      <div className="bg-black" />
      <section className="flex min-w-0 flex-col overflow-hidden bg-[#ececec] font-['Liberation_Sans',Arial,sans-serif]">
        <Ribbon />
        <div className="h-2.5 shrink-0" />
        <Toolbar />
        <div className="flex min-h-0 flex-1 border-x-[3px] border-b-[3px] border-[#c8c8c8]">
          <div className="flex min-w-0 flex-1 flex-col"><Canvas /></div>
        </div>
        <footer className="h-[44px] shrink-0" />
      </section>
    </main>
  );
}
